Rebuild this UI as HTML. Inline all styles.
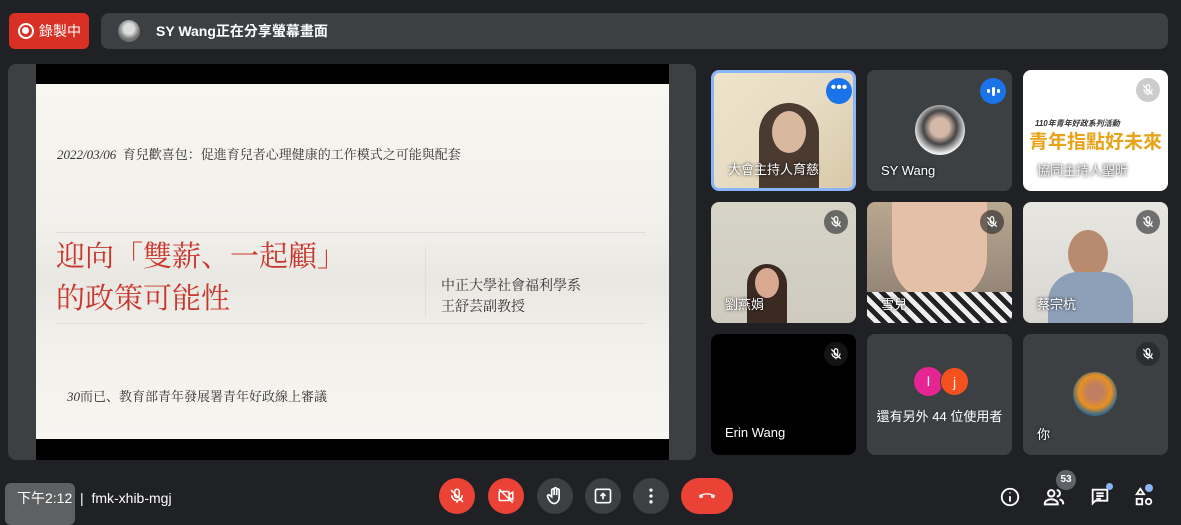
<!DOCTYPE html>
<html><head><meta charset="utf-8"><style>
*{margin:0;padding:0;box-sizing:border-box}
body{width:1181px;height:525px;background:#202124;position:relative;overflow:hidden;font-family:"Liberation Sans","Noto Sans CJK TC",sans-serif;color:#fff}
.abs{position:absolute}
.rec{left:9px;top:13px;width:80px;height:36px;background:#d93025;border-radius:6px;font-size:14px;display:flex;align-items:center;padding-left:9px}
.rec i{width:16px;height:16px;border:2.5px solid #fff;border-radius:50%;display:inline-block;margin-right:5px;position:relative}
.rec i:after{content:"";position:absolute;left:2px;top:2px;width:7px;height:7px;border-radius:50%;background:#fff}
.share{left:101px;top:13px;width:1067px;height:36px;background:#3c4043;border-radius:8px;font-size:14px;display:flex;align-items:center;font-weight:bold}
.av{width:22px;height:22px;border-radius:50%;background:radial-gradient(circle at 50% 40%,#ddd 0 30%,#777 60%,#555);margin:0 16px 0 17px}
.slidebg{left:8px;top:64px;width:688px;height:396px;background:#3c4043;border-radius:8px}
.blk{left:36px;top:64px;width:633px;height:396px;background:#000}
.slide{left:36px;top:84px;width:633px;height:355px;background:linear-gradient(180deg,#f8f6f1 0%,#f2f0eb 40%,#e9e7e2 55%,#f3f1ec 75%,#f7f5f0 100%);font-family:"Liberation Serif","Noto Serif CJK SC",serif;color:#333}
.tile{width:145px;height:121px;background:#3c4043;border-radius:8px;overflow:hidden}
.name{position:absolute;left:14px;bottom:12px;font-size:13px;color:#fff;text-shadow:0 0 3px #000}
.mic{position:absolute;right:8px;top:8px;width:24px;height:24px;border-radius:50%;background:rgba(32,33,36,.6);display:flex;align-items:center;justify-content:center}
.btn{top:478px;width:36px;height:36px;border-radius:50%;background:#3c4043;display:flex;align-items:center;justify-content:center}
.red{background:#ea4335}
</style></head><body>
<svg width="0" height="0" style="position:absolute"><defs><symbol id="m" viewBox="0 0 24 24"><g fill="none" stroke="#fff" stroke-width="2"><rect x="9" y="3" width="6" height="11" rx="3"/><path d="M5 11a7 7 0 0014 0M12 18v3M4 4l16 16"/></g></symbol></defs></svg>
<div class="abs rec"><i></i>錄製中</div>
<div class="abs share"><div class="av"></div>SY Wang正在分享螢幕畫面</div>

<div class="abs slidebg"></div>
<div class="abs blk"></div>
<div class="abs slide">
 <div class="abs" style="left:21px;top:60px;font-size:13px"><i>2022/03/06</i>&nbsp; 育兒歡喜包：促進育兒者心理健康的工作模式之可能與配套</div>
 <div class="abs" style="left:20px;top:148px;width:590px;border-top:1px solid #ddd"></div>
 <div class="abs" style="left:20px;top:239px;width:590px;border-top:1px solid #ddd"></div>
 <div class="abs" style="left:389px;top:163px;height:70px;border-left:1px solid #ddd"></div>
 <div class="abs" style="left:20px;top:152px;font-size:29px;line-height:42px;color:#c8372d">迎向「雙薪、一起顧」<br>的政策可能性</div>
 <div class="abs" style="left:405px;top:192px;font-size:14px;line-height:21px">中正大學社會福利學系<br>王舒芸副教授</div>
 <div class="abs" style="left:31px;top:302px;font-size:13px"><i>30</i>而已、教育部青年發展署青年好政線上審議</div>
</div>

<div class="abs tile" style="left:711px;top:70px;border:3px solid #8ab4f8;background:linear-gradient(135deg,#efe4c8,#e7dcc4 50%,#d8c8a8)">
 <div class="abs" style="left:45px;top:30px;width:60px;height:90px;border-radius:30px 30px 0 0;background:#4a3a30"></div>
 <div class="abs" style="left:58px;top:38px;width:34px;height:42px;border-radius:50%;background:#d9b8a0"></div>
 <div class="abs" style="left:112px;top:5px;width:26px;height:26px;border-radius:50%;background:#1a73e8;font-size:16px;text-align:center;line-height:20px">•••</div>
 <div class="name" style="left:14px;bottom:10px">大會主持人育慈</div>
</div>
<div class="abs tile" style="left:867px;top:70px">
 <div class="abs" style="left:48px;top:35px;width:50px;height:50px;border-radius:50%;background:radial-gradient(circle at 50% 45%,#d4b8a8 0 25%,#444 45%,#eee 70%)"></div>
 <div class="abs" style="left:113px;top:8px;width:26px;height:26px;border-radius:50%;background:#1a73e8;display:flex;align-items:center;justify-content:center;gap:2px"><i style="width:3px;height:4px;background:#fff;border-radius:2px"></i><i style="width:3px;height:9px;background:#fff;border-radius:2px"></i><i style="width:3px;height:4px;background:#fff;border-radius:2px"></i></div>
 <div class="name" style="bottom:13px">SY Wang</div>
</div>
<div class="abs tile" style="left:1023px;top:70px;background:#fff">
 <div class="abs" style="left:12px;top:48px;font-size:8px;color:#333;font-style:italic;font-weight:bold">110年青年好政系列活動</div>
 <div class="abs" style="left:6px;top:57px;font-size:19px;color:#e8a318;font-weight:bold;white-space:nowrap">青年指點好未來</div>
 <div class="mic" style="background:#ccc"><svg width="14" height="14"><use href="#m"/></svg></div>
 <div class="name" style="color:#eee">協同主持人聖昕</div>
</div>
<div class="abs tile" style="left:711px;top:202px;background:linear-gradient(#d6d3c7,#cfccbf)">
 <div class="abs" style="left:36px;top:62px;width:40px;height:60px;border-radius:20px 20px 0 0;background:#3a2a22"></div>
 <div class="abs" style="left:44px;top:66px;width:24px;height:30px;border-radius:50%;background:#d8a890"></div>
 <div class="mic"><svg width="14" height="14"><use href="#m"/></svg></div><div class="name" style="bottom:10px">劉燕娟</div>
</div>
<div class="abs tile" style="left:867px;top:202px;background:linear-gradient(#b8a890,#8a7a70)">
 <div class="abs" style="left:25px;top:0;width:95px;height:100px;border-radius:0 0 45px 45px;background:#e4c0a8"></div>
 <div class="abs" style="left:0;top:90px;width:145px;height:31px;background:repeating-linear-gradient(45deg,#222 0 5px,#eee 5px 10px)"></div>
 <div class="mic"><svg width="14" height="14"><use href="#m"/></svg></div><div class="name" style="bottom:10px">雪兒</div>
</div>
<div class="abs tile" style="left:1023px;top:202px;background:linear-gradient(#e8e6e0,#d8d6d0)">
 <div class="abs" style="left:45px;top:28px;width:40px;height:48px;border-radius:50%;background:#b88a70"></div>
 <div class="abs" style="left:25px;top:70px;width:85px;height:51px;border-radius:30px 30px 0 0;background:#8ea0b8"></div>
 <div class="mic"><svg width="14" height="14"><use href="#m"/></svg></div><div class="name" style="bottom:10px">蔡宗杭</div>
</div>
<div class="abs tile" style="left:711px;top:334px;background:#000"><div class="mic"><svg width="14" height="14"><use href="#m"/></svg></div><div class="name" style="bottom:15px">Erin Wang</div></div>
<div class="abs tile" style="left:867px;top:334px">
 <div class="abs" style="left:47px;top:33px;width:29px;height:29px;border-radius:50%;background:#e52592;font-size:14px;text-align:center;line-height:29px">I</div>
 <div class="abs" style="left:73px;top:33px;width:29px;height:29px;border-radius:50%;background:#f4511e;font-size:14px;text-align:center;line-height:29px;border:1px solid #3c4043">j</div>
 <div class="abs" style="left:0;width:145px;top:72px;text-align:center;font-size:13px">還有另外 44 位使用者</div>
</div>
<div class="abs tile" style="left:1023px;top:334px">
 <div class="abs" style="left:50px;top:38px;width:44px;height:44px;border-radius:50%;background:radial-gradient(circle at 50% 45%,#c08060 0 25%,#e89020 50%,#3a6a8a 70%)"></div>
 <div class="mic"><svg width="14" height="14"><use href="#m"/></svg></div><div class="name" style="bottom:12px">你</div>
</div>

<div class="abs" style="left:5px;top:483px;width:70px;height:42px;background:#8a8a8a;opacity:.6;border-radius:6px"></div>
<div class="abs" style="left:17px;top:488px;font-size:14px">下午2:12 &nbsp;|&nbsp; fmk-xhib-mgj</div>

<div class="abs btn red" style="left:439px"><svg width="18" height="18"><use href="#m"/></svg></div>
<div class="abs btn red" style="left:488px"><svg width="18" height="18" viewBox="0 0 24 24" fill="none" stroke="#fff" stroke-width="2"><rect x="3" y="6" width="13" height="12" rx="1"/><path d="M16 10l5-3v10l-5-3M3 3l18 18"/></svg></div>
<div class="abs btn" style="left:537px"><svg width="20" height="20" viewBox="0 0 24 24" fill="none" stroke="#fff" stroke-width="2"><path d="M8 13V5a1.5 1.5 0 013 0v6V3.5a1.5 1.5 0 013 0V11V5a1.5 1.5 0 013 0v8c0 5-3 8-6 8-3 0-5-2-7-6l-1-3a1.5 1.5 0 012.5-1z"/></svg></div>
<div class="abs btn" style="left:585px"><svg width="20" height="20" viewBox="0 0 24 24" fill="none" stroke="#fff" stroke-width="2"><rect x="3" y="4" width="18" height="16" rx="2"/><path d="M12 16V9M9 12l3-3 3 3"/></svg></div>
<div class="abs btn" style="left:633px"><svg width="20" height="20" viewBox="0 0 24 24" fill="#fff"><circle cx="12" cy="5" r="2"/><circle cx="12" cy="12" r="2"/><circle cx="12" cy="19" r="2"/></svg></div>
<div class="abs btn red" style="left:681px;width:52px;border-radius:18px"><svg width="22" height="22" viewBox="0 0 24 24" fill="#fff"><path d="M12 9c-3 0-6 .8-9 2.5l1.5 3 3-1V11c2.8-.8 6.2-.8 9 0v2.5l3 1 1.5-3C18 9.8 15 9 12 9z"/></svg></div>

<div class="abs" style="left:999px;top:486px"><svg width="22" height="22" viewBox="0 0 24 24" fill="none" stroke="#fff" stroke-width="2"><circle cx="12" cy="12" r="9"/><path d="M12 11v6M12 7v1"/></svg></div>
<div class="abs" style="left:1043px;top:486px"><svg width="22" height="22" viewBox="0 0 24 24" fill="none" stroke="#fff" stroke-width="2.2"><circle cx="9" cy="8" r="3.5"/><path d="M2 20v-1c0-3 4-4.5 7-4.5s7 1.5 7 4.5v1zM15 4.5a3.5 3.5 0 010 7M18 14.5c2 .6 4 2 4 4.5v1"/></svg></div>
<div class="abs" style="left:1056px;top:470px;width:20px;height:20px;border-radius:50%;background:#5f6368;font-size:10px;font-weight:bold;text-align:center;line-height:20px">53</div>
<div class="abs" style="left:1089px;top:486px"><svg width="22" height="22" viewBox="0 0 24 24" fill="none" stroke="#fff" stroke-width="2"><path d="M4 4h16v12H7l-3 3z"/><path d="M8 8h8M8 11h8M8 14h5"/></svg></div>
<div class="abs" style="left:1106px;top:483px;width:7px;height:7px;border-radius:50%;background:#8ab4f8"></div>
<div class="abs" style="left:1133px;top:486px"><svg width="22" height="22" viewBox="0 0 24 24" fill="none" stroke="#fff" stroke-width="2"><path d="M8 3l4 6H4z"/><rect x="4" y="14" width="6" height="6"/><circle cx="17" cy="17" r="3"/></svg></div>
<div class="abs" style="left:1145px;top:484px;width:8px;height:8px;border-radius:50%;background:#8ab4f8"></div>
</body></html>
